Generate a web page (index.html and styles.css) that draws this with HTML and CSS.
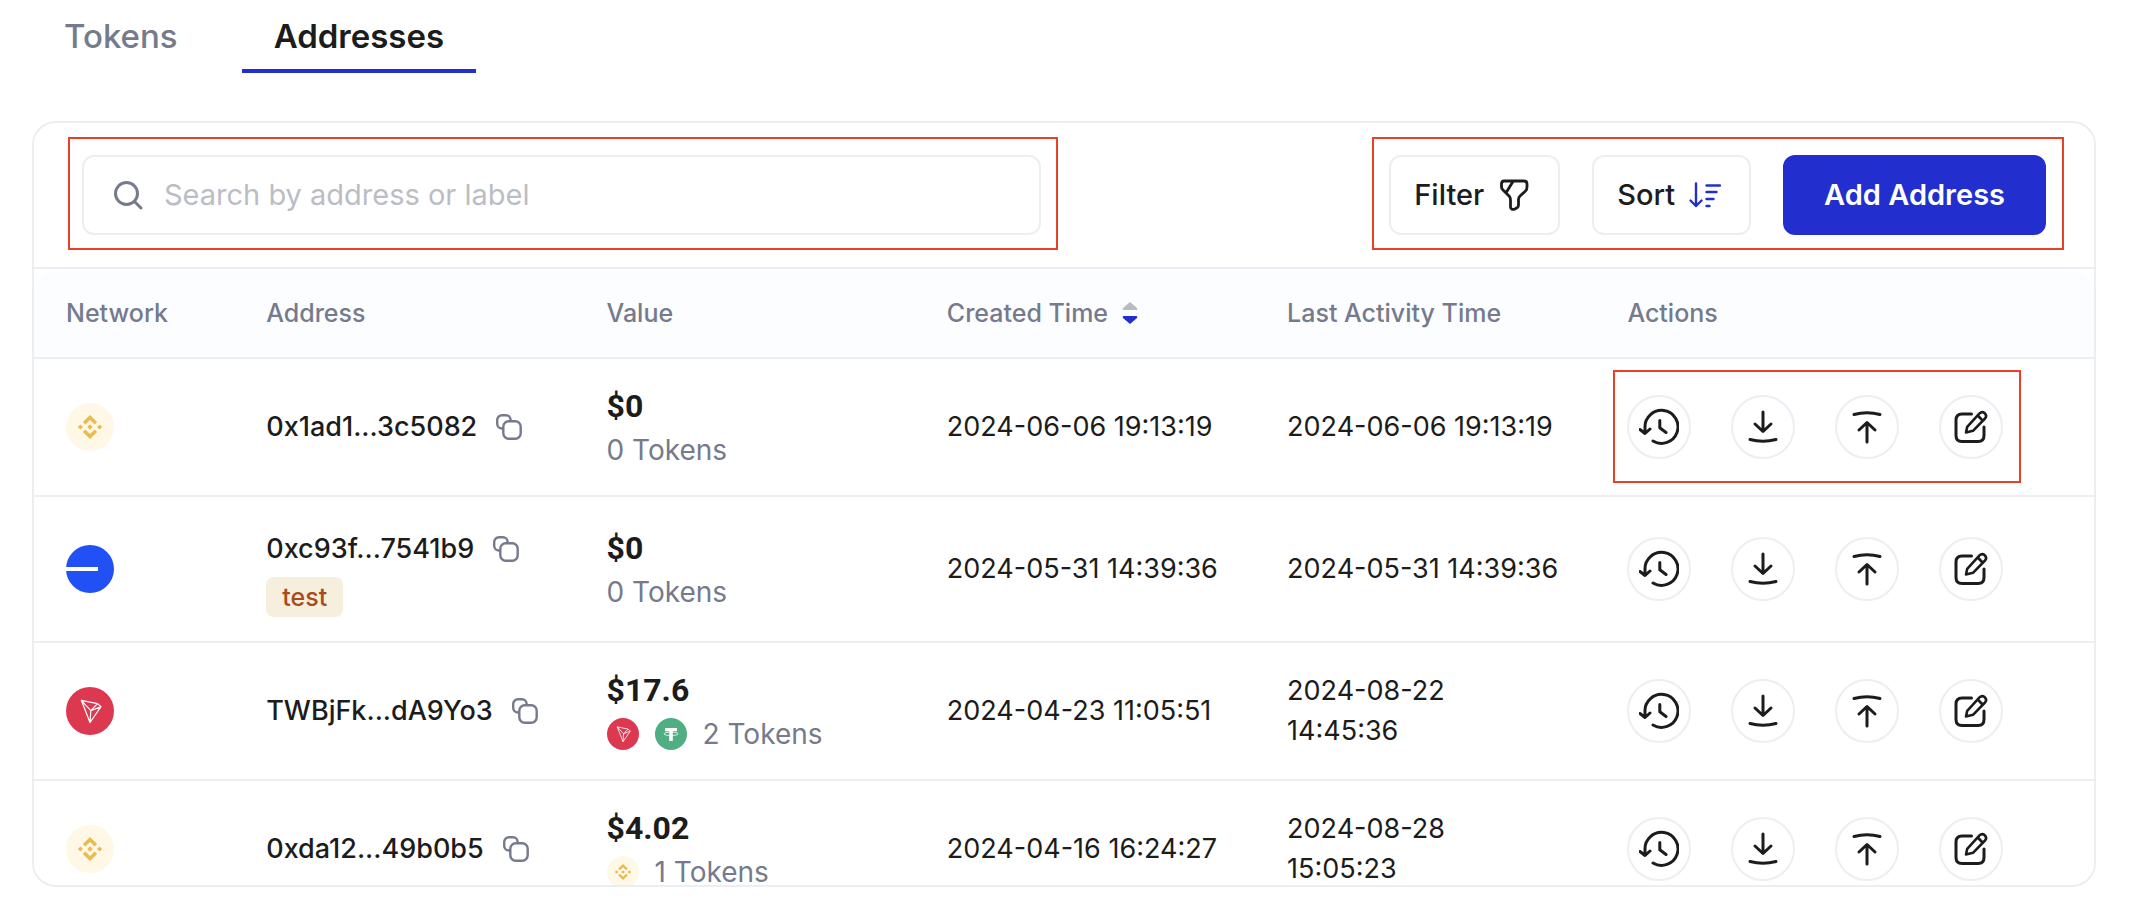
FILE: index.html
```html
<!DOCTYPE html>
<html lang="en">
<head>
<meta charset="utf-8">
<title>Addresses</title>
<link rel="stylesheet" href="styles.css">
</head>
<body>
<svg class="sprite" aria-hidden="true">
  <symbol id="copy" viewBox="0 0 26 26"><g fill="none" stroke="currentColor" stroke-width="2.4"><rect x="7.3" y="7.3" width="17.4" height="17.4" rx="5.4"/><path d="M7.3 14.5H6A4.8 4.8 0 0 1 1.2 9.7V6A4.8 4.8 0 0 1 6 1.2H10A4.6 4.6 0 0 1 14.6 5.8V7.3"/></g></symbol>
  <symbol id="history" viewBox="-20 -20 40 40"><path d="M-14 5.5V.5A16.5 16.5 0 1 1 -6 14M-19 2.5L-14 6.5L-9 2M.8 -6.5V.8L7 5.5"/></symbol>
  <symbol id="download" viewBox="-20 -20 40 40"><path d="M0 -15V4M-8 -3L0 4.5L8 -3M-13 12.5Q0 16 13 12.5"/></symbol>
  <symbol id="upload" viewBox="-20 -20 40 40"><path d="M0 15V-4M-8 3L0 -4.5L8 3M-13 -12.5Q0 -16 13 -12.5"/></symbol>
  <symbol id="edit" viewBox="-20 -20 40 40"><path d="M.5 -13H-9Q-15 -13 -15 -7V8.5Q-15 14.5 -9 14.5H7Q13 14.5 13 8.5V0"/><path stroke-width="2.6" d="M-5 5.5L-3.8 -.2L8.5 -13.6Q11 -16 13.5 -14Q16.5 -11 14 -8.5L2 3.8ZM6.8 -11.5L11.5 -6.5"/></symbol>
  <symbol id="bnb" viewBox="-24 -24 48 48"><circle r="24" fill="#fff8e7"/><path d="M-5.9 -3.8L0 -9.6L5.9 -3.8M-5.9 3.8L0 9.6L5.9 3.8" fill="none" stroke="#ebbb4e" stroke-width="3.6"/><path d="M0 -2.7L2.7 0L0 2.7L-2.7 0ZM-9.6 -2.6L-7 0L-9.6 2.6L-12.2 0ZM9.6 -2.6L12.2 0L9.6 2.6L7 0Z" fill="#ebbb4e"/></symbol>
  <symbol id="base" viewBox="-24 -24 48 48"><circle r="24" fill="#2151f5"/><path d="M-24 -2H8V2H-24Z" fill="#fff"/></symbol>
  <symbol id="tron" viewBox="-24 -24 48 48"><circle r="24" fill="#dc3850"/><path d="M-8.7 -10.7L7.5 -7.4L11 -4.4L0 11.5ZL.8 -.3L0 11.5M.8 -.3L11 -4.4M.8 -.3L7.5 -7.4" fill="none" stroke="#fff" stroke-width="1.2" stroke-linejoin="round"/></symbol>
  <symbol id="usdt" viewBox="-16 -16 32 32"><circle r="16" fill="#4fae82"/><path d="M-6 -6H6V-2.8H1.8V7H-1.8V-2.8H-6Z" fill="#fff"/><ellipse cy="-.2" rx="7" ry="1.8" fill="none" stroke="#fff" stroke-width=".8"/></symbol>
</svg>

<nav class="tabs">
  <a class="tab" href="#tokens">Tokens</a>
  <a class="tab tab-active" href="#addresses" aria-current="page">Addresses</a>
</nav>

<main class="card">
  <div class="toolbar">
    <div class="marked search-area">
      <label class="search">
        <svg class="search-icon" viewBox="0 0 32 32" aria-hidden="true"><circle cx="14.5" cy="14.5" r="11"/><path d="M22.5 22.5L29 29"/></svg>
        <input type="search" placeholder="Search by address or label" aria-label="Search by address or label">
      </label>
    </div>
    <div class="marked button-area">
      <button class="btn" type="button">Filter
        <svg class="btn-icon btn-icon-filter" viewBox="0 0 32 32" aria-hidden="true"><path d="M6 2H26Q29 2 29 5V8Q29 10.500 27.500 12L22 17Q20.500 18.500 20.500 20.500V26Q20.500 27.500 19.500 28.300L17 30Q13 31.500 12.500 28V21Q12.500 19 11.500 17.500L5 11Q3.500 9.500 3.500 8V5Q3.500 2 6 2ZM15 2.500L8.500 13"/></svg>
      </button>
      <button class="btn" type="button">Sort
        <svg class="btn-icon btn-icon-sort" viewBox="0 0 32 32" aria-hidden="true"><path d="M7 4.500V27M1.500 21.500L7 27L12.500 21.500M17.500 6.500H31M17.500 13H27.500M17.500 20H24.500M17.500 27H20.500"/></svg>
      </button>
      <button class="btn btn-primary" type="button">Add Address</button>
    </div>
  </div>

  <table class="table">
    <colgroup><col class="col-network"><col class="col-data"><col class="col-data"><col class="col-data"><col class="col-data"><col></colgroup>
    <thead>
      <tr>
        <th>Network</th><th>Address</th><th>Value</th>
        <th aria-sort="descending"><span class="sortable">Created Time <svg class="sorter" viewBox="0 0 16 22" aria-hidden="true"><path d="M8 0L15 6Q16 8 14 8H2Q0 8 1 6Z" fill="#b8bac4"/><path d="M8 22L15 16Q16 14 14 14H2Q0 14 1 16Z" fill="#222fce"/></svg></span></th>
        <th>Last Activity Time</th><th>Actions</th>
      </tr>
    </thead>
    <tbody>
      <tr>
        <td><svg class="network" role="img" aria-label="BNB Chain"><use href="#bnb"/></svg></td>
        <td><div class="address">0x1ad1...3c5082 <button class="copy" type="button" aria-label="Copy address"><svg><use href="#copy"/></svg></button></div></td>
        <td><div class="amount">$0</div><div class="tokens">0 Tokens</div></td>
        <td>2024-06-06 19:13:19</td>
        <td>2024-06-06 19:13:19</td>
        <td><div class="actions actions-marked">
          <button class="action" type="button" aria-label="History"><svg><use href="#history"/></svg></button>
          <button class="action" type="button" aria-label="Receive"><svg><use href="#download"/></svg></button>
          <button class="action" type="button" aria-label="Send"><svg><use href="#upload"/></svg></button>
          <button class="action" type="button" aria-label="Edit"><svg><use href="#edit"/></svg></button>
        </div></td>
      </tr>
      <tr>
        <td><svg class="network" role="img" aria-label="Base"><use href="#base"/></svg></td>
        <td><div class="address">0xc93f...7541b9 <button class="copy" type="button" aria-label="Copy address"><svg><use href="#copy"/></svg></button></div><span class="tag">test</span></td>
        <td><div class="amount">$0</div><div class="tokens">0 Tokens</div></td>
        <td>2024-05-31 14:39:36</td>
        <td>2024-05-31 14:39:36</td>
        <td><div class="actions">
          <button class="action" type="button" aria-label="History"><svg><use href="#history"/></svg></button>
          <button class="action" type="button" aria-label="Receive"><svg><use href="#download"/></svg></button>
          <button class="action" type="button" aria-label="Send"><svg><use href="#upload"/></svg></button>
          <button class="action" type="button" aria-label="Edit"><svg><use href="#edit"/></svg></button>
        </div></td>
      </tr>
      <tr>
        <td><svg class="network" role="img" aria-label="Tron"><use href="#tron"/></svg></td>
        <td><div class="address">TWBjFk...dA9Yo3 <button class="copy" type="button" aria-label="Copy address"><svg><use href="#copy"/></svg></button></div></td>
        <td><div class="amount">$17.6</div><div class="tokens"><svg class="token" aria-hidden="true"><use href="#tron"/></svg><svg class="token" aria-hidden="true"><use href="#usdt"/></svg>2 Tokens</div></td>
        <td>2024-04-23 11:05:51</td>
        <td>2024-08-22<br>14:45:36</td>
        <td><div class="actions">
          <button class="action" type="button" aria-label="History"><svg><use href="#history"/></svg></button>
          <button class="action" type="button" aria-label="Receive"><svg><use href="#download"/></svg></button>
          <button class="action" type="button" aria-label="Send"><svg><use href="#upload"/></svg></button>
          <button class="action" type="button" aria-label="Edit"><svg><use href="#edit"/></svg></button>
        </div></td>
      </tr>
      <tr>
        <td><svg class="network" role="img" aria-label="BNB Chain"><use href="#bnb"/></svg></td>
        <td><div class="address">0xda12...49b0b5 <button class="copy" type="button" aria-label="Copy address"><svg><use href="#copy"/></svg></button></div></td>
        <td><div class="amount">$4.02</div><div class="tokens"><svg class="token" aria-hidden="true"><use href="#bnb"/></svg>1 Tokens</div></td>
        <td>2024-04-16 16:24:27</td>
        <td>2024-08-28<br>15:05:23</td>
        <td><div class="actions">
          <button class="action" type="button" aria-label="History"><svg><use href="#history"/></svg></button>
          <button class="action" type="button" aria-label="Receive"><svg><use href="#download"/></svg></button>
          <button class="action" type="button" aria-label="Send"><svg><use href="#upload"/></svg></button>
          <button class="action" type="button" aria-label="Edit"><svg><use href="#edit"/></svg></button>
        </div></td>
      </tr>
    </tbody>
  </table>
</main>
</body>
</html>
```
FILE: styles.css
```css
:root {
  --ink: #1c1c1c;
  --muted: #757a8c;
  --line: #ededf4;
  --blue: #222fce;
  --mark: #ea4026;
}

* { box-sizing: border-box; }

body {
  margin: 0;
  padding: 0 34px 26px 32px;
  height: 100vh;
  display: flex;
  flex-direction: column;
  gap: 48px;
  background: #fff;
  color: var(--ink);
  font-family: Inter, "Open Sans", sans-serif;
  font-size: 27px;
  line-height: 40px;
}

button, input { font: inherit; color: inherit; }
svg { display: block; flex: none; }
.sprite { position: absolute; width: 0; height: 0; }

.tabs { display: flex; gap: 32px; }
.tab {
  padding: 12px 32px 9px;
  border-bottom: 4px solid transparent;
  font-size: 33px;
  line-height: 48px;
  font-weight: 500;
  color: var(--muted);
  text-decoration: none;
}
.tab-active { color: var(--ink); font-weight: 600; border-color: var(--blue); }

.card {
  flex: 1;
  min-height: 0;
  overflow: hidden;
  border: 2px solid var(--line);
  border-radius: 24px;
}

.toolbar {
  display: flex;
  justify-content: space-between;
  padding: 14px 30px 17px 34px;
  border-bottom: 2px solid var(--line);
}
.marked { border: 2px solid var(--mark); }
.search-area { width: 49.6%; padding: 16px 15px 13px 12px; }
.button-area { display: flex; gap: 32px; padding: 16px 16px 13px 15px; }

.search {
  display: flex;
  align-items: center;
  gap: 20px;
  height: 80px;
  padding: 0 28px;
  border: 2px solid var(--line);
  border-radius: 12px;
  font-size: 29px;
}
.search-icon { width: 32px; height: 32px; fill: none; stroke: var(--muted); stroke-width: 3; stroke-linecap: round; }
.search input { flex: 1; min-width: 0; padding: 0; border: 0; outline: 0; background: none; }
.search input::placeholder { color: #bbbdc6; opacity: 1; }

.btn {
  display: flex;
  align-items: center;
  gap: 14px;
  height: 80px;
  padding: 0 28px 0 23px;
  border: 2px solid var(--line);
  border-radius: 12px;
  background: #fff;
  font-size: 29px;
  font-weight: 500;
}
.btn-icon { width: 32px; height: 32px; fill: none; stroke: currentColor; stroke-linecap: round; stroke-linejoin: round; }
.btn-icon-filter { stroke-width: 2.8; }
.btn-icon-sort { stroke-width: 2.4; color: var(--blue); }
.btn-primary { padding: 0 39px; border-color: var(--blue); background: var(--blue); color: #fff; font-weight: 600; }

.table { width: 100%; table-layout: fixed; border-collapse: separate; border-spacing: 0; }
.col-network { width: 9.72%; }
.col-data { width: 16.52%; }
.table th, .table td { padding: 24px 0 24px 32px; border-bottom: 2px solid var(--line); text-align: left; vertical-align: middle; }
.table th { background: #fcfdff; color: var(--muted); font-size: 25px; font-weight: 500; }
.table th:first-child { border-top-left-radius: 24px; }
.table th:last-child { border-top-right-radius: 24px; }

.sortable { display: flex; align-items: center; gap: 14px; }
.sorter { width: 16px; height: 22px; }
.network { width: 48px; height: 48px; }

.address { display: flex; align-items: center; gap: 19px; height: 56px; font-weight: 500; }
.copy { padding: 0; border: 0; background: none; color: var(--muted); }
.copy svg { width: 26px; height: 26px; }
.tag {
  display: inline-block;
  padding: 0 16px;
  border-radius: 8px;
  background: #f7efde;
  color: #a94b20;
  font-size: 25px;
  font-weight: 500;
  vertical-align: top;
}

.amount { font-family: Roboto, sans-serif; font-size: 32px; font-weight: 700; line-height: 46px; }
.tokens { display: flex; align-items: center; gap: 16px; font-size: 28px; line-height: 42px; color: var(--muted); }
.token { width: 32px; height: 32px; }

.actions { position: relative; display: flex; gap: 40px; width: max-content; }
.actions-marked::after {
  content: "";
  position: absolute;
  inset: -25px -18px -24px -14px;
  border: 2px solid var(--mark);
  pointer-events: none;
}
.action {
  display: grid;
  place-items: center;
  width: 64px;
  height: 64px;
  padding: 0;
  border: 2px solid var(--line);
  border-radius: 50%;
  background: #fff;
}
.action svg { width: 40px; height: 40px; fill: none; stroke: var(--ink); stroke-width: 3; stroke-linecap: round; stroke-linejoin: round; }
```
